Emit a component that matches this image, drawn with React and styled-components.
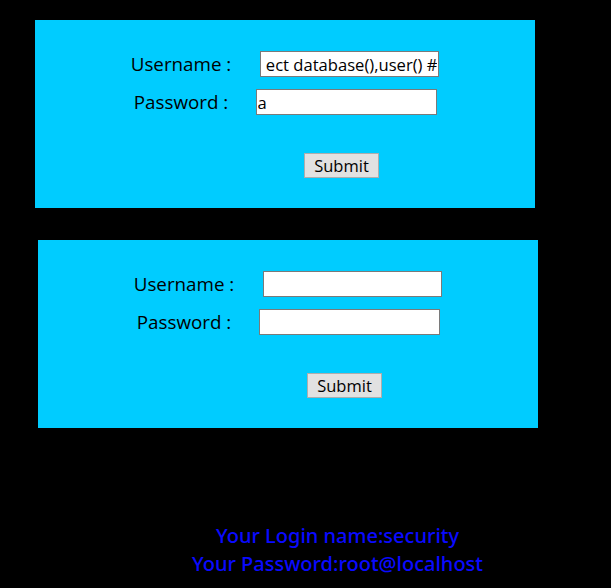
import React from "react";
import styled, { createGlobalStyle } from "styled-components";

const Global = createGlobalStyle`
  html, body { margin: 0; padding: 0; background: #000; }
  body { font-family: "Open Sans", "Noto Sans", sans-serif; }
`;

const Page = styled.div`
  width: 611px;
  min-height: 588px;
  background: #000;
  padding-top: 20px;
  box-sizing: border-box;
`;

const Box = styled.form`
  width: 500px;
  height: 188px;
  box-sizing: border-box;
  background: #00ccff;
  margin-left: ${(p) => p.$left}px;
  margin-top: ${(p) => p.$top}px;
  padding-top: 31px;
  display: flex;
  flex-direction: column;
  gap: 12px;
`;

const Row = styled.div`
  display: grid;
  grid-template-columns: 80px 132px 200px;
  height: 26px;
  align-items: center;
`;

const Label = styled.label`
  grid-column: 2;
  text-align: center;
  font-family: "Open Sans", "Noto Sans", sans-serif;
  font-size: 18.8px;
  color: #000;
  white-space: nowrap;
`;

const Cell = styled.div`
  grid-column: 3;
  display: flex;
  justify-content: center;
  transform: translateX(${(p) => p.$dx || 0}px);
`;

const Input = styled.input`
  width: ${(p) => p.$w}px;
  height: 26px;
  box-sizing: border-box;
  border: 1px solid #7a7a7a;
  background: #fff;
  padding: 0 1px;
  font-family: "Open Sans", "Noto Sans", sans-serif;
  font-size: 16.6px;
  color: #000;
  outline: none;
`;

const SubmitRow = styled.div`
  margin-top: 26px;
  padding-left: 269px;
`;

const Button = styled.button`
  width: 75px;
  height: 25px;
  box-sizing: border-box;
  background: #e1e1e1;
  border: 1px solid #adadad;
  border-radius: 0;
  font-family: "Open Sans", "Noto Sans", sans-serif;
  font-size: 16.5px;
  color: #000;
  padding: 0;
  line-height: 22px;
`;

const Result = styled.div`
  margin-top: 94px;
  padding-left: 64px;
  text-align: center;
  font-family: "Noto Sans", "Open Sans", sans-serif;
  font-weight: 500;
  font-size: 20px;
  line-height: 28px;
  color: #0a0aff;
`;

function LoginBox({ left, top, user, pass, ux = 0, px = 0 }) {
  return (
    <Box $left={left} $top={top} onSubmit={(e) => e.preventDefault()}>
      <Row>
        <Label>Username :</Label>
        <Cell $dx={ux}>
          <Input $w={179} defaultValue={user} />
        </Cell>
      </Row>
      <Row>
        <Label>Password :</Label>
        <Cell $dx={px}>
          <Input $w={181} defaultValue={pass} />
        </Cell>
      </Row>
      <SubmitRow>
        <Button type="submit">Submit</Button>
      </SubmitRow>
    </Box>
  );
}

export default function App() {
  return (
    <Page>
      <Global />
      <LoginBox left={35} top={0} user=" ect database(),user() #" pass="a" ux={2} px={-1} />
      <LoginBox left={38} top={32} user="" pass="" ux={2} px={-1} />
      <Result>
        <div>Your Login name:security</div>
        <div>Your Password:root@localhost</div>
      </Result>
    </Page>
  );
}
